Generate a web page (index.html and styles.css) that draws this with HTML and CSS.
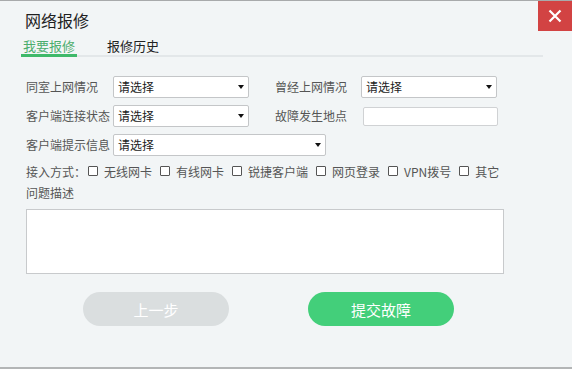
FILE: index.html
```html
<!DOCTYPE html>
<html lang="zh-CN">
<head>
    <meta charset="UTF-8">
    <title>网络报修</title>
    <link rel="stylesheet" href="styles.css">
</head>
<body>
    <div class="dialog">
        <!-- Bouton fermer -->
        <button class="close" type="button" aria-label="关闭">
            <svg width="14" height="14" viewBox="0 0 14 14"><path d="M1.5 1.5 L12.5 12.5 M12.5 1.5 L1.5 12.5" stroke="#fff" stroke-width="2.2" fill="none"/></svg>
        </button>

        <h1 class="title">网络报修</h1>

        <div class="tabs">
            <span class="tab active">我要报修</span>
            <span class="tab">报修历史</span>
        </div>

        <form class="form">
            <div class="row">
                <label class="label">同室上网情况</label>
                <div class="select"><span>请选择</span></div>
                <label class="label label-2">曾经上网情况</label>
                <div class="select"><span>请选择</span></div>
            </div>
            <div class="row">
                <label class="label">客户端连接状态</label>
                <div class="select"><span>请选择</span></div>
                <label class="label label-2">故障发生地点</label>
                <input class="text-input" type="text">
            </div>
            <div class="row">
                <label class="label">客户端提示信息</label>
                <div class="select select-wide"><span>请选择</span></div>
            </div>

            <div class="checks">
                <span class="checks-title">接入方式：</span>
                <label class="check"><input type="checkbox">无线网卡</label>
                <label class="check"><input type="checkbox">有线网卡</label>
                <label class="check"><input type="checkbox">锐捷客户端</label>
                <label class="check"><input type="checkbox">网页登录</label>
                <label class="check"><input type="checkbox">VPN拨号</label>
                <label class="check"><input type="checkbox">其它</label>
            </div>

            <div class="desc-label">问题描述</div>
            <textarea class="desc"></textarea>

            <div class="actions">
                <button class="btn btn-prev" type="button">上一步</button>
                <button class="btn btn-submit" type="button">提交故障</button>
            </div>
        </form>
    </div>
</body>
</html>
```

FILE: styles.css
```css
/* Page */
body {
    margin: 0;
    font-family: "Noto Sans CJK SC", "Liberation Sans", sans-serif;
    background-color: #f2f5f6;
}

/* Fenêtre */
.dialog {
    position: relative;
    height: 369px;
    box-sizing: border-box;
    border-top: 1px solid #a8aaab;
    border-bottom: 2px solid #b3b5b6;
    background-color: #f2f5f6;
    overflow: hidden;
}

.close {
    position: absolute;
    top: 0;
    right: 0;
    width: 34px;
    height: 30px;
    padding: 0;
    border: none;
    background-color: #d24343;
    display: flex;
    align-items: center;
    justify-content: center;
    cursor: pointer;
}

.title {
    margin: 0;
    padding: 8px 0 0 25px;
    font-size: 16px;
    line-height: 22px;
    font-weight: normal;
    color: #1f1f1f;
}

/* Onglets */
.tabs {
    display: flex;
    margin: 7px 29px 0 21px;
    border-bottom: 2px solid #e3e7e9;
}

.tab {
    padding: 0 2px;
    margin-right: 28px;
    font-size: 13px;
    line-height: 16px;
    color: #222;
}

.tab.active {
    color: #4cae6e;
    margin-bottom: -2px;
    border-bottom: 3px solid #3fb96a;
    padding-bottom: 0;
}

/* Formulaire */
.form {
    padding: 19px 0 0 26px;
}

.row {
    display: flex;
    align-items: center;
    height: 22px;
    margin-bottom: 7px;
}

.label {
    width: 87px;
    font-size: 12px;
    line-height: 16px;
    color: #555;
    white-space: nowrap;
}

.label-2 {
    width: 86px;
    margin-left: 26px;
}

.select {
    position: relative;
    width: 136px;
    height: 22px;
    box-sizing: border-box;
    border: 1px solid #c4c6c8;
    border-radius: 2px;
    background-color: #fff;
    font-size: 12px;
    line-height: 20px;
    padding-left: 4px;
    color: #222;
}

.select::after {
    content: "";
    position: absolute;
    right: 4px;
    top: 8px;
    border-left: 3px solid transparent;
    border-right: 3px solid transparent;
    border-top: 4px solid #111;
}

.select-wide {
    width: 213px;
}

.text-input {
    width: 135px;
    height: 19px;
    box-sizing: border-box;
    margin: 1px 0 0 2px;
    border: 1px solid #d0d2d4;
    border-radius: 2px;
    background-color: #fff;
    padding: 0 4px;
}

/* Cases à cocher */
.checks {
    display: flex;
    align-items: center;
    height: 16px;
    margin-top: 4px;
    font-size: 12px;
    color: #555;
}

.checks-title {
    margin-right: 2px;
}

.check {
    display: flex;
    align-items: center;
    margin-right: 8px;
    white-space: nowrap;
}

.check input {
    appearance: none;
    -webkit-appearance: none;
    width: 10px;
    height: 10px;
    margin: 0 6px 0 0;
    box-sizing: border-box;
    border: 1px solid #555;
    border-radius: 1px;
    background-color: #fff;
}

.desc-label {
    margin-top: 6px;
    font-size: 12px;
    line-height: 16px;
    color: #555;
}

.desc {
    display: block;
    width: 478px;
    height: 65px;
    box-sizing: border-box;
    margin-top: 8px;
    border: 1px solid #c8cacc;
    background-color: #fff;
    resize: none;
}

/* Boutons */
.actions {
    display: flex;
    gap: 79px;
    margin: 18px 0 0 57px;
}

.btn {
    width: 146px;
    height: 34px;
    border: none;
    border-radius: 17px;
    font-family: inherit;
    font-size: 15px;
    color: #fff;
    cursor: pointer;
}

.btn-prev {
    background-color: #dadedf;
}

.btn-submit {
    background-color: #43cf7a;
}
```
